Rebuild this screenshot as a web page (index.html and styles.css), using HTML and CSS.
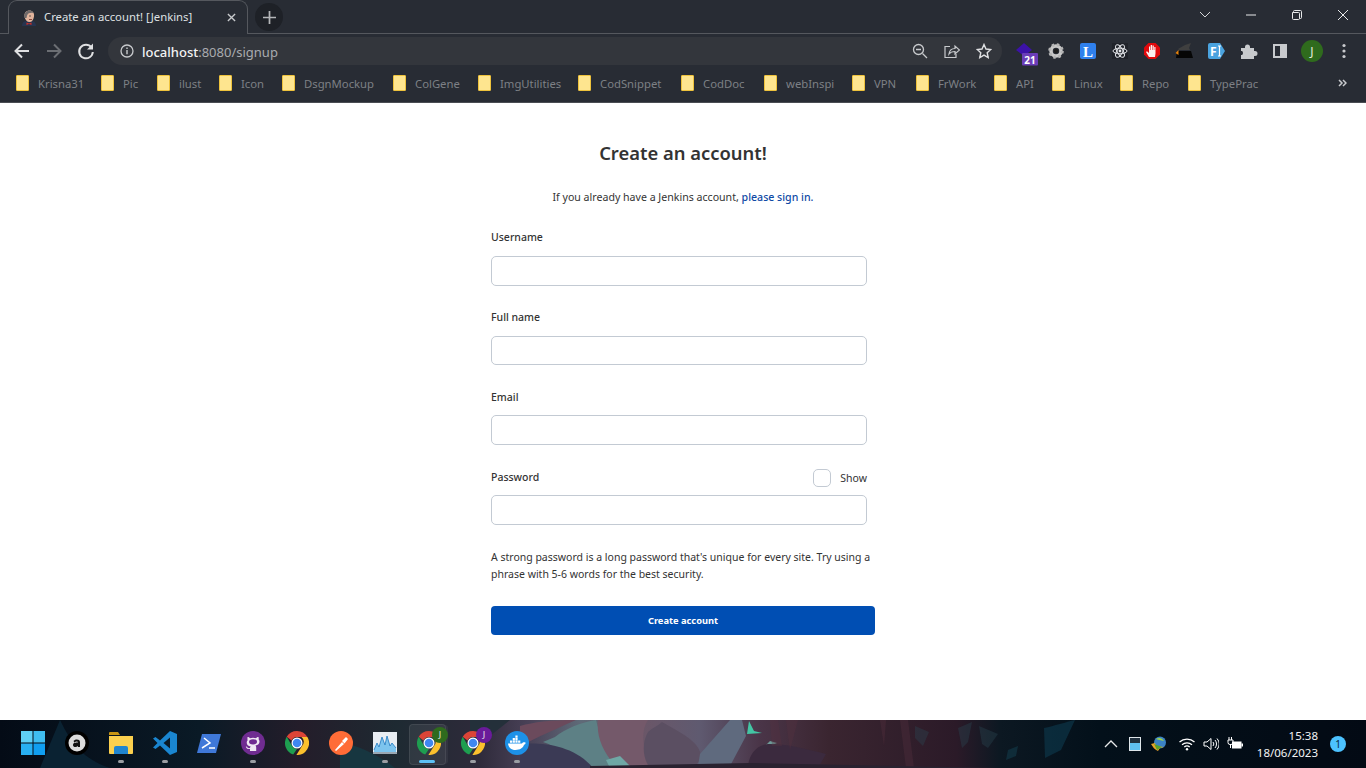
FILE: index.html
```html
<!DOCTYPE html>
<html>
<head>
    <meta charset="utf-8" />
    <title>Create an account! [Jenkins]</title>
    <link rel="stylesheet" href="styles.css">
</head>
<body>
<div class="browser">
    <div class="tabstrip">
        <div class="tab">
            <svg class="favicon" viewBox="0 0 16 16"><path d="M1 16c0-3 1.500-4.500 4-5h6c2.500.5 4 2 4 5z" fill="#26344f"/><path d="M3.500 6.500C3 2.500 5.500.5 8.500.5s5 2.500 4.500 6-2 5.500-4.500 5.500S4 10 3.500 6.500z" fill="#e2b49c"/><path d="M3.500 8C2.500 3 5.500.5 8.500.5c2 0 3.500 1 4 2.500C9.500 2.500 7 3 6 5.500L5.500 8z" fill="#6f6a6a"/><circle cx="9" cy="6" r=".7" fill="#333"/><path d="M8 9.500h3" stroke="#8a4a40"/><path d="M5.500 12.500l2.500 1 2.500-1v2.500L8 14l-2.500 1z" fill="#cc3028"/></svg>
            <span class="tab-title">Create an account! [Jenkins]</span>
            <svg class="tab-close" viewBox="0 0 10 10"><path d="M1 1l8 8M9 1l-8 8" stroke="#c8cacd" stroke-width="1.500"/></svg>
        </div>
        <div class="newtab">
            <svg viewBox="0 0 12 12"><path d="M6 0v12M0 6h12" stroke="#b4b6b9" stroke-width="1.600"/></svg>
        </div>
        <div class="winctl">
            <svg class="winbtn" viewBox="0 0 46 30"><path d="M18 12l5 5 5-5" fill="none" stroke="#d5d6d8"/></svg>
            <svg class="winbtn" viewBox="0 0 46 30"><path d="M18 15h10" stroke="#e8e9ea"/></svg>
            <svg class="winbtn" viewBox="0 0 46 30"><path d="M19.500 12.500v-1a1 1 0 0 1 1-1h6a1 1 0 0 1 1 1v6a1 1 0 0 1-1 1h-1M18.500 12.500h6a1 1 0 0 1 1 1v5a1 1 0 0 1-1 1h-5a1 1 0 0 1-1-1z" fill="none" stroke="#e8e9ea"/></svg>
            <svg class="winbtn" viewBox="0 0 46 30"><path d="M18 10l10 10M28 10L18 20" stroke="#e8e9ea"/></svg>
        </div>
    </div>

    <div class="toolbar">
        <div class="navbtns">
            <svg class="navbtn" viewBox="0 0 32 32"><path d="M23 16H10M16 9.500L9.500 16l6.500 6.500" fill="none" stroke="#dfe0e2" stroke-width="2"/></svg>
            <svg class="navbtn" viewBox="0 0 32 32"><path d="M9 16h13M16 9.500l6.500 6.500-6.500 6.500" fill="none" stroke="#6b6e73" stroke-width="2"/></svg>
            <svg class="navbtn" viewBox="0 0 32 32"><path d="M21.500 12.500A6.800 6.800 0 1 0 22.800 17" fill="none" stroke="#dfe0e2" stroke-width="2"/><path d="M23 8.500v6h-6z" fill="#dfe0e2"/></svg>
        </div>
        <div class="omnibox">
            <svg class="infoicon" viewBox="0 0 14 14"><circle cx="7" cy="7" r="6" fill="none" stroke="#c8cacd" stroke-width="1.300"/><path d="M7 6v4.200M7 3.500v1.400" stroke="#c8cacd" stroke-width="1.400"/></svg>
            <span class="url"><b>localhost</b>:8080/signup</span>
            <div class="omni-actions">
                <svg class="omni-icon" viewBox="0 0 16 16"><circle cx="6.500" cy="6.500" r="5" fill="none" stroke="#c8cacd" stroke-width="1.300"/><path d="M10.500 10.500L15 15M4 6.500h5" stroke="#c8cacd" stroke-width="1.300"/></svg>
                <svg class="omni-icon" viewBox="0 0 16 16"><path d="M6 3.500H1v11h11V11" fill="none" stroke="#c8cacd" stroke-width="1.200"/><path d="M5 11c.5-4 3-5.500 6-5.500V3l4.500 4-4.500 4V8.500c-2.500 0-4.500.5-6 2.500z" fill="none" stroke="#c8cacd" stroke-width="1.200"/></svg>
                <svg class="omni-icon" viewBox="0 0 16 16"><path d="M8 1.500l2 4.500 4.800.5-3.600 3.200 1 4.800L8 12.100l-4.200 2.400 1-4.800L1.200 6.500 6 6z" fill="none" stroke="#dfe0e2" stroke-width="1.400"/></svg>
            </div>
        </div>
        <div class="extensions">
            <svg class="ext" viewBox="0 0 32 32"><path d="M8 15l8-7 8 7-8 6z" fill="#3c12a8"/><rect x="14" y="18" width="16" height="12.500" rx="1" fill="#6b3db8"/><text x="22" y="28.500" class="ext-num">21</text></svg>
            <svg class="ext" viewBox="0 0 32 32"><circle cx="16" cy="16" r="5" fill="none" stroke="#c9c9c9" stroke-width="3.500"/><circle cx="16" cy="16" r="6.300" fill="none" stroke="#b5b5b5" stroke-width="3" stroke-dasharray="2.400 2.550"/><circle cx="16" cy="16" r="2.200" fill="#1d1d1d"/></svg>
            <svg class="ext" viewBox="0 0 32 32"><rect x="8" y="8" width="16" height="16" rx="2" fill="#2f80ed"/><text x="16" y="21.500" class="ext-l">L</text></svg>
            <svg class="ext" viewBox="0 0 32 32"><rect x="8" y="8" width="16" height="16" fill="#20232a"/><g fill="none" stroke="#e4e6ea"><ellipse cx="16" cy="16" rx="7" ry="2.800"/><ellipse cx="16" cy="16" rx="7" ry="2.800" transform="rotate(60 16 16)"/><ellipse cx="16" cy="16" rx="7" ry="2.800" transform="rotate(120 16 16)"/></g><circle cx="16" cy="16" r="1.400" fill="#e4e6ea"/></svg>
            <svg class="ext" viewBox="0 0 32 32"><path d="M12.500 8h7l4.500 4.500v7L19.500 24h-7L8 19.500v-7z" fill="#e0090c"/><path d="M13 22l-3-5 1-.8 2 1.800V11.500h1.200V15h.5v-5h1.300v5h.5v-4.500h1.300V15h.5v-3h1.200v6.500L19 22z" fill="#fbeeee"/></svg>
            <svg class="ext" viewBox="0 0 32 32"><path d="M10 14l7-4 6-2-2 5 1 2H11z" fill="#3f3f3f"/><path d="M9 16h14l2 7H8z" fill="#060606"/><path d="M7.500 18l3-3v5z" fill="#e8830c"/></svg>
            <svg class="ext" viewBox="0 0 32 32"><path d="M8 10a2 2 0 0 1 2-2h10l5 8-5 8H10a2 2 0 0 1-2-2z" fill="#4aa3df"/><text x="10" y="21" class="ext-fi">F</text><path d="M18 11h3M18 21h3M19.500 11v10" stroke="#fff" stroke-width="1.200"/></svg>
            <svg class="ext" viewBox="0 0 32 32"><path d="M9 13h4v-1a2.500 2.500 0 0 1 5 0v1h4v3h1a2.500 2.500 0 0 1 0 5h-1v3H9v-4h1a2.500 2.500 0 0 0 0-4H9z" fill="#c8cacd"/></svg>
            <svg class="ext" viewBox="0 0 32 32"><rect x="10" y="10" width="12" height="12" fill="none" stroke="#c8cacd" stroke-width="2"/><rect x="16" y="10" width="7" height="12" fill="#c8cacd"/></svg>
            <div class="avatar"><span>J</span></div>
            <svg class="ext" viewBox="0 0 32 32"><circle cx="16" cy="10.500" r="1.600" fill="#c8cacd"/><circle cx="16" cy="16" r="1.600" fill="#c8cacd"/><circle cx="16" cy="21.500" r="1.600" fill="#c8cacd"/></svg>
        </div>
    </div>

    <div class="bookmarks">
        <a class="bm bm-w1">Krisna31</a>
        <a class="bm bm-w2">Pic</a>
        <a class="bm bm-w3">ilust</a>
        <a class="bm bm-w4">Icon</a>
        <a class="bm bm-w5">DsgnMockup</a>
        <a class="bm bm-w6">ColGene</a>
        <a class="bm bm-w7">ImgUtilities</a>
        <a class="bm bm-w8">CodSnippet</a>
        <a class="bm bm-w9">CodDoc</a>
        <a class="bm bm-w10">webInspi</a>
        <a class="bm bm-w11">VPN</a>
        <a class="bm bm-w12">FrWork</a>
        <a class="bm bm-w13">API</a>
        <a class="bm bm-w14">Linux</a>
        <a class="bm bm-w15">Repo</a>
        <a class="bm">TypePrac</a>
        <svg class="bm-more" viewBox="0 0 9 8"><path d="M1 1l3 3-3 3M5 1l3 3-3 3" fill="none" stroke="#c8cacd" stroke-width="1.500"/></svg>
    </div>
</div>

<div class="page">
    <form class="signup" onsubmit="return false">
        <h1>Create an account!</h1>
        <p class="subtitle">If you already have a Jenkins account, <a href="#">please sign in.</a></p>
        <div class="field">
            <label for="username">Username</label>
            <input type="text" id="username">
        </div>
        <div class="field">
            <label for="fullname">Full name</label>
            <input type="text" id="fullname">
        </div>
        <div class="field">
            <label for="email" class="label-low">Email</label>
            <input type="text" id="email">
        </div>
        <div class="field">
            <div class="pw-head">
                <label for="password" class="label-low">Password</label>
                <label class="show"><span class="check"></span>Show</label>
            </div>
            <input type="password" id="password">
        </div>
        <p class="hint">A strong password is a long password that's unique for every site. Try using a phrase with 5-6 words for the best security.</p>
        <button type="submit">Create account</button>
    </form>
</div>

<div class="taskbar">
    <svg class="wallpaper" viewBox="0 0 1366 48" preserveAspectRatio="none">
        <defs>
            <linearGradient id="wall" x1="0" x2="1" y1="0" y2="0">
                <stop offset="0" stop-color="#040b16"/>
                <stop offset="0.146" stop-color="#0a1a26"/>
                <stop offset="0.22" stop-color="#241d2a"/>
                <stop offset="0.29" stop-color="#1e2a32"/>
                <stop offset="0.35" stop-color="#2e2a3a"/>
                <stop offset="0.388" stop-color="#4a4258"/>
                <stop offset="0.425" stop-color="#5f6a78"/>
                <stop offset="0.468" stop-color="#6b5667"/>
                <stop offset="0.512" stop-color="#5f5a70"/>
                <stop offset="0.556" stop-color="#4a3548"/>
                <stop offset="0.607" stop-color="#3a2530"/>
                <stop offset="0.7" stop-color="#2b1a28"/>
                <stop offset="0.732" stop-color="#0c1822"/>
                <stop offset="0.805" stop-color="#03101a"/>
                <stop offset="1" stop-color="#030a14"/>
            </linearGradient>
        </defs>
        <rect width="1366" height="48" fill="url(#wall)"/>
        <path d="M60 0c10 20 20 38 50 48H40z" fill="#0a2232"/>
        <path d="M340 22c20 4 40 14 55 26h-55z" fill="#173640"/>
        <path d="M470 0h40l-25 20-15 2z" fill="#24303a"/>
        <path d="M520 6c14-4 30-6 56-6-18 8-40 18-56 26z" fill="#6b4a5c"/>
        <path d="M543 22l12-5c10-8 26-15 41-17 4 16 12 34 22 48h-48c-4-14-14-22-27-26z" fill="#5d8085"/>
        <path d="M520 24c24-2 55 2 73 24h-73z" fill="#3b3a55"/>
        <path d="M598 0h50c-8 12-6 32 6 48h-36c-14-14-22-30-20-48z" fill="#74596a"/>
        <path d="M648 12c4-4 10-6 14-10l14 8c14 8 28 18 24 30l-6 8h-44c-8-10-8-26-2-36z" fill="#5b4f62"/>
        <path d="M606 40l14-4 10 10 4 2h-24z" fill="#6fa7a5"/>
        <path d="M700 34l30-34h12l4 16-16 30h-32z" fill="#5f6a7e"/>
        <path d="M749 1l5 10 8 2-15 1z" fill="#43c6a4"/>
        <path d="M764 27l6-6 7 2-9 4z" fill="#6e9a98"/>
        <path d="M748 48c0-12 8-24 22-24 16 0 32 4 56 10l-8 14z" fill="#3b2a3e"/>
        <path d="M770 0h8l4 26h-10zM786 0h12l-8 30zM880 0h6l-2 26zM900 0h8l6 48h-8z" fill="#56303e" opacity="0.35"/>
        <path d="M590 46l160-3 250 5H590z" fill="#2a2230"/>
        <path d="M915 6l14 6-6 14-8-8zM958 8l14-6-4 20-6 6zM979 6l19 8-10 14-6-4z" fill="#2a4a55" opacity="0.35"/>
        <path d="M1044 8c10-2 22-6 31-8l-14 30-16 8z" fill="#0e3a4e" opacity="0.6"/>
        <path d="M1008 30l10-4-2 10-10 4z" fill="#123a4a" opacity="0.6"/>
    </svg>
    <div class="apps">
        <div class="app">
            <svg viewBox="0 0 24 24"><rect width="11.500" height="11.500" fill="#5fd0f5"/><rect x="12.500" width="11.500" height="11.500" fill="#3fbdf0"/><rect y="12.500" width="11.500" height="11.500" fill="#28b0f2"/><rect x="12.500" y="12.500" width="11.500" height="11.500" fill="#109ef0"/></svg>
        </div>
        <div class="app">
            <svg viewBox="0 0 24 24"><circle cx="12" cy="12" r="12" fill="#000"/><circle cx="12" cy="12" r="8.500" fill="#dcdcdc"/><path d="M8.500 10c1-2 6.500-2.500 6.500 1v5h-2v-1c-1.500 1.500-5 1.500-5-1 0-2.500 3-2.500 5-2.500 0-1.500-2.500-1.500-3.500 0z" fill="#111"/></svg>
        </div>
        <div class="app running">
            <svg viewBox="0 0 24 24"><path d="M0 2a1 1 0 0 1 1-1h8l2 3H0z" fill="#c79412"/><path d="M0 5h24v17a1 1 0 0 1-1 1H1a1 1 0 0 1-1-1z" fill="#fbd04e"/><path d="M5 17a2 2 0 0 1 2-2h10a2 2 0 0 1 2 2v6H5z" fill="#2085cf"/></svg>
        </div>
        <div class="app running">
            <svg viewBox="0 0 24 24"><path d="M17 0l7 3v18l-7 3L7 14.500 2.500 18 0 16.500 4.500 12 0 7.500 2.500 6 7 9.500z" fill="#1a86d0"/><path d="M17 6.500L10.500 12l6.500 5.500z" fill="#0b1a26"/></svg>
        </div>
        <div class="app">
            <svg viewBox="0 0 24 24"><path d="M5 3h19l-5 19H0z" fill="#3f78d8"/><path d="M7 7l6 5-8 5M12 17h6" fill="none" stroke="#fff" stroke-width="1.500"/></svg>
        </div>
        <div class="app running">
            <svg viewBox="0 0 24 24"><circle cx="12" cy="12" r="12" fill="#6f2c91"/><path d="M6.500 6c1 0 2 .6 2.500 1.200a9 9 0 0 1 6 0C15.500 6.600 16.500 6 17.500 6c.3.800.3 1.500.1 2.200.5.500.9 1.300.9 2.300 0 2.500-1.500 3.600-4 4 .5.500.7 1.200.7 2V20H9v-2c-2 .4-3.500-.2-4.200-2.500.8 0 1.500.5 2 1.300.5.500 1.300.5 2.200.3 0-.7.200-1.200.7-1.600-2.500-.4-4-1.500-4-4 0-1 .4-1.800.9-2.300-.2-.7-.2-1.400-.1-2.200z" fill="#efe8f3"/><ellipse cx="12" cy="10.800" rx="4" ry="2.600" fill="#6f2c91"/></svg>
        </div>
        <div class="app">
            <svg viewBox="0 0 24 24"><use href="#chrome"/></svg>
        </div>
        <div class="app">
            <svg viewBox="0 0 24 24"><circle cx="12" cy="12" r="12" fill="#ff6c37"/><path d="M6 19l7-8 2 2-8 7zM13 10l4-4 2 2-3.500 4.500z" fill="#fff"/></svg>
        </div>
        <div class="app running">
            <svg viewBox="0 0 24 24"><rect y="1" width="24" height="22" fill="#e8edf2"/><path d="M1 19l3-7 2 4 3-10 3 8 2-9 3 10 2-3 4 5v4H1z" fill="#7dc4ee"/><path d="M1 19l3-7 2 4 3-10 3 8 2-9 3 10 2-3 4 5" fill="none" stroke="#1f78c0" stroke-width=".8"/><rect y="21" width="24" height="2" fill="#9aa7b2"/></svg>
        </div>
        <div class="app active">
            <svg viewBox="0 0 24 24"><use href="#chrome"/></svg>
            <span class="pbadge pbadge-green">J</span>
        </div>
        <div class="app running">
            <svg viewBox="0 0 24 24"><use href="#chrome"/></svg>
            <span class="pbadge pbadge-purple">J</span>
        </div>
        <div class="app running">
            <svg viewBox="0 0 24 24"><circle cx="12" cy="12" r="12" fill="#1d91e8"/><path d="M3 12.500h14c.5-1 2-1.500 3.500-1 .3 1-.5 2-1.500 2.300C18 17 15 19 10.500 19 6 19 3.500 16.500 3 12.500z" fill="#fff"/><path d="M5 9.500h2.200v2.200H5zM7.700 9.500h2.200v2.200H7.700zM10.400 9.500h2.200v2.200h-2.200zM7.700 7h2.200v2.200H7.700zM10.400 7h2.200v2.200h-2.200zM10.400 4.500h2.200v2.200h-2.200zM13.100 9.500h2.200v2.200h-2.200z" fill="#fff"/></svg>
        </div>
    </div>
    <div class="tray">
        <svg class="tray-icon" viewBox="0 0 16 16"><path d="M2 11l6-6 6 6" fill="none" stroke="#e8e9ea" stroke-width="1.300"/></svg>
        <svg class="tray-icon" viewBox="0 0 16 16"><rect x="2" y="1" width="12" height="14" fill="#20303e"/><rect x="2" y="7" width="12" height="8" fill="#5fc0f0"/><rect x="2.500" y="1.500" width="11" height="13" fill="none" stroke="#dfe6ea"/></svg>
        <svg class="tray-icon" viewBox="0 0 16 16"><circle cx="9" cy="6.500" r="6" fill="#3b82c4"/><path d="M5 3c3-2 6-1 8 2-3-1-6-1-8-2z" fill="#9fd24a"/><path d="M0 8c2 3 3 5 7 7l2-3 4-1-8-1-1-3z" fill="#e9a32a"/><path d="M3 8l3 6 5-3z" fill="#5aa02c"/></svg>
        <svg class="tray-icon tray-gap" viewBox="0 0 16 16"><path d="M.5 6a11 11 0 0 1 15 0M3 8.700a7.500 7.500 0 0 1 10 0M5.300 11a4 4 0 0 1 5.400 0" fill="none" stroke="#fff" stroke-width="1.200"/><circle cx="8" cy="13.300" r="1.200" fill="#fff"/></svg>
        <svg class="tray-icon" viewBox="0 0 16 16"><path d="M1 6h3l4-3.500v11L4 10H1z" fill="none" stroke="#fff"/><path d="M10 6a3 3 0 0 1 0 4M12 4a6 6 0 0 1 0 8M14 2.500a8 8 0 0 1 0 11" fill="none" stroke="#fff"/></svg>
        <svg class="tray-icon" viewBox="0 0 16 16"><rect x="5" y="5.500" width="9.500" height="7" fill="#fff"/><rect x="14.500" y="7.500" width="1.500" height="3" fill="#fff"/><path d="M2 1v3M4.500 1v3M1 4h5v2.500a2 2 0 0 1-2 2H3a2 2 0 0 1-2-2zM3.500 8.500V12" fill="none" stroke="#fff"/></svg>
        <div class="clock"><div>15:38</div><div>18/06/2023</div></div>
        <span class="notify">1</span>
    </div>
    <svg class="defs" viewBox="0 0 24 24">
        <defs>
            <g id="chrome">
                <path d="M12 0a12 12 0 0 1 10.400 6H12a6 6 0 0 0-5.500 3.500L1.700 5.800A12 12 0 0 1 12 0z" fill="#db4437"/>
                <path d="M1.700 5.800L7 14.800a6 6 0 0 0 5 3.200L8.200 23.400A12 12 0 0 1 1.700 5.800z" fill="#1e9e50"/>
                <path d="M22.400 6a12 12 0 0 1-11 18L17 15a6 6 0 0 0-.5-9z" fill="#fbc02d"/>
                <circle cx="12" cy="12" r="5.500" fill="#fff"/>
                <circle cx="12" cy="12" r="4.300" fill="#3f87f0"/>
            </g>
        </defs>
    </svg>
</div>
</body>
</html>
```

FILE: styles.css
```css
*{
    box-sizing: border-box;
}
html, body{
    height: 100%;
}
body{
    margin: 0px;
    display: flex;
    flex-direction: column;
    overflow: hidden;
    font-family: "Noto Sans", "Open Sans", "Liberation Sans", sans-serif;
    background: #fff;
}
svg{
    display: block;
    flex: none;
}

/* browser chrome */
.browser{
    height: 103px;
    background: #282c34;
    border-bottom: 1px solid #4a4d53;
}
.tabstrip{
    display: flex;
    height: 34px;
    padding-left: 8px;
    border-bottom: 1px solid #55585e;
}
.tab{
    display: flex;
    align-items: center;
    width: 240px;
    height: 34px;
    padding: 0 11px 0 12px;
    background: #282c34;
    border: 1px solid #55585e;
    border-bottom: none;
    border-radius: 9px 9px 0 0;
}
.favicon{
    width: 16px;
    height: 16px;
}
.tab-title{
    flex: 1;
    margin-left: 7px;
    padding-bottom: 2px;
    font-size: 11.300px;
    color: #dfe0e2;
    white-space: nowrap;
}
.tab-close{
    width: 9px;
    height: 9px;
}
.newtab{
    display: flex;
    align-items: center;
    justify-content: center;
    width: 28px;
    height: 28px;
    margin: 3px 0 0 7px;
    border-radius: 50%;
    background: #1e2127;
}
.newtab svg{
    width: 13px;
    height: 13px;
}
.winctl{
    display: flex;
    margin-left: auto;
}
.winbtn{
    width: 46px;
    height: 30px;
}
.toolbar{
    display: flex;
    align-items: center;
    height: 34px;
    padding-left: 6px;
}
.navbtns{
    display: flex;
}
.navbtn{
    width: 32px;
    height: 32px;
}
.omnibox{
    display: flex;
    align-items: center;
    width: 894px;
    height: 28px;
    margin-left: 6px;
    padding: 0 10px 0 12px;
    border-radius: 14px;
    background: #33363c;
}
.infoicon{
    width: 14px;
    height: 14px;
}
.url{
    margin-left: 8px;
    padding-top: 2px;
    font-size: 13px;
    color: #a9abaf;
}
.url b{
    font-weight: 500;
    color: #f2f3f4;
}
.omni-actions{
    display: flex;
    gap: 16px;
    margin-left: auto;
}
.omni-icon{
    width: 16px;
    height: 16px;
}
.extensions{
    display: flex;
    align-items: center;
    margin-left: 6px;
}
.ext{
    width: 32px;
    height: 32px;
}
.ext-num{
    font-size: 10px;
    font-weight: 700;
    fill: #fff;
    text-anchor: middle;
}
.ext-l{
    font-family: "Liberation Serif", serif;
    font-size: 15px;
    font-weight: 700;
    fill: #fff;
    text-anchor: middle;
}
.ext-fi{
    font-size: 12px;
    font-weight: 700;
    fill: #fff;
}
.avatar{
    display: flex;
    align-items: center;
    justify-content: center;
    width: 22px;
    height: 22px;
    margin: 0 5px;
    border-radius: 50%;
    background: #2f6b1d;
    font-size: 12px;
    color: #e4ecdf;
}
.bookmarks{
    display: flex;
    align-items: center;
    height: 34px;
    padding: 0 0 4px 16px;
}
.bm{
    display: flex;
    align-items: center;
    font-size: 11.300px;
    color: #7d8085;
    white-space: nowrap;
}
.bm::before{
    content: "";
    width: 11px;
    height: 14px;
    margin-right: 9px;
    background: #fee58f;
    border: 1px solid #eec23c;
    border-radius: 1px;
}
.bm-w1{ width: 85px; }
.bm-w2{ width: 56px; }
.bm-w3{ width: 62px; }
.bm-w4{ width: 63px; }
.bm-w5{ width: 111px; }
.bm-w6{ width: 85px; }
.bm-w7{ width: 100px; }
.bm-w8{ width: 103px; }
.bm-w9{ width: 83px; }
.bm-w10{ width: 88px; }
.bm-w11{ width: 64px; }
.bm-w12{ width: 78px; }
.bm-w13{ width: 58px; }
.bm-w14{ width: 68px; }
.bm-w15{ width: 68px; }
.bm-more{
    width: 9px;
    height: 8px;
    margin-left: auto;
    margin-right: 19px;
}

/* signup form */
.page{
    flex: 1;
    display: flex;
    justify-content: center;
    background: #fff;
}
.signup{
    width: 384px;
    padding-top: 38px;
    color: #333;
}
h1{
    margin: 0;
    font-size: 18.400px;
    line-height: 24px;
    font-weight: 600;
    text-align: center;
}
.subtitle{
    margin: 24px 0 23px;
    font-size: 10.600px;
    line-height: 16px;
    text-align: center;
}
.subtitle a{
    color: #0f4aa5;
    font-weight: 500;
    text-decoration: none;
}
.field{
    width: 376px;
    margin-bottom: 22px;
}
.field label{
    display: block;
    height: 18px;
    font-size: 10.500px;
    line-height: 18.600px;
    font-weight: 500;
}
.field .label-low{
    line-height: 20px;
}
.field input{
    display: block;
    width: 100%;
    height: 29.667px;
    margin-top: 10px;
    border: 1px solid #c3cad3;
    border-radius: 5px;
    background: #fff;
}
.pw-head{
    display: flex;
    justify-content: space-between;
    height: 18px;
}
.field .show{
    display: flex;
    align-items: center;
    gap: 9px;
    height: 20px;
    padding-top: 2px;
    font-weight: 400;
}
.check{
    width: 18px;
    height: 18px;
    border: 1.500px solid #c3cad3;
    border-radius: 5px;
}
.hint{
    margin: 24px 0 23.500px;
    font-size: 10.500px;
    line-height: 17px;
}
button{
    display: block;
    width: 384px;
    height: 29px;
    border: none;
    border-radius: 4px;
    background: #004eb3;
    color: #fff;
    font-family: inherit;
    font-size: 9.300px;
    font-weight: 700;
}

/* windows taskbar */
.taskbar{
    display: flex;
    justify-content: space-between;
    height: 48px;
    padding-left: 11px;
    position: relative;
    overflow: hidden;
    background: #040b16;
}
.wallpaper{
    position: absolute;
    left: 0;
    top: 0;
    width: 100%;
    height: 100%;
}
.defs{
    position: absolute;
    width: 0;
    height: 0;
}
.apps{
    display: flex;
    position: relative;
}
.app{
    display: flex;
    align-items: center;
    justify-content: center;
    width: 44px;
    height: 48px;
    padding-bottom: 2px;
    position: relative;
}
.app svg{
    width: 24px;
    height: 24px;
}
.running::after, .active::after{
    content: "";
    position: absolute;
    left: 19px;
    bottom: 5px;
    width: 6px;
    height: 3px;
    border-radius: 2px;
    background: #9b9ea3;
}
.active::before{
    content: "";
    position: absolute;
    left: 2px;
    top: 4px;
    width: 35px;
    height: 39px;
    border-radius: 4px;
    background: rgba(255, 255, 255, 0.07);
    border: 1px solid rgba(255, 255, 255, 0.08);
    box-shadow: 3px 0 0 -1px rgba(255, 255, 255, 0.05);
}
.active::after{
    left: 12px;
    width: 16px;
    background: #5cc1f5;
}
.app > svg{
    position: relative;
}
.pbadge{
    position: absolute;
    left: 25px;
    top: 7px;
    width: 16px;
    height: 16px;
    border-radius: 50%;
    font-size: 9px;
    line-height: 16px;
    text-align: center;
    color: #e8e8e8;
}
.pbadge-green{
    background: #2f6b1d;
}
.pbadge-purple{
    background: #6a1b9a;
}
.tray{
    display: flex;
    align-items: center;
    position: relative;
    padding-right: 20px;
}
.tray-icon{
    width: 16px;
    height: 16px;
    margin-right: 8px;
}
.tray-gap{
    margin-left: 4px;
}
.clock{
    width: 62px;
    margin-left: 5px;
    font-size: 11.500px;
    line-height: 17px;
    text-align: right;
    color: #f2f3f4;
}
.notify{
    width: 16px;
    height: 16px;
    margin-left: 12px;
    border-radius: 50%;
    background: #4cc2ff;
    font-size: 10px;
    line-height: 16px;
    text-align: center;
    color: #06283d;
}
```
